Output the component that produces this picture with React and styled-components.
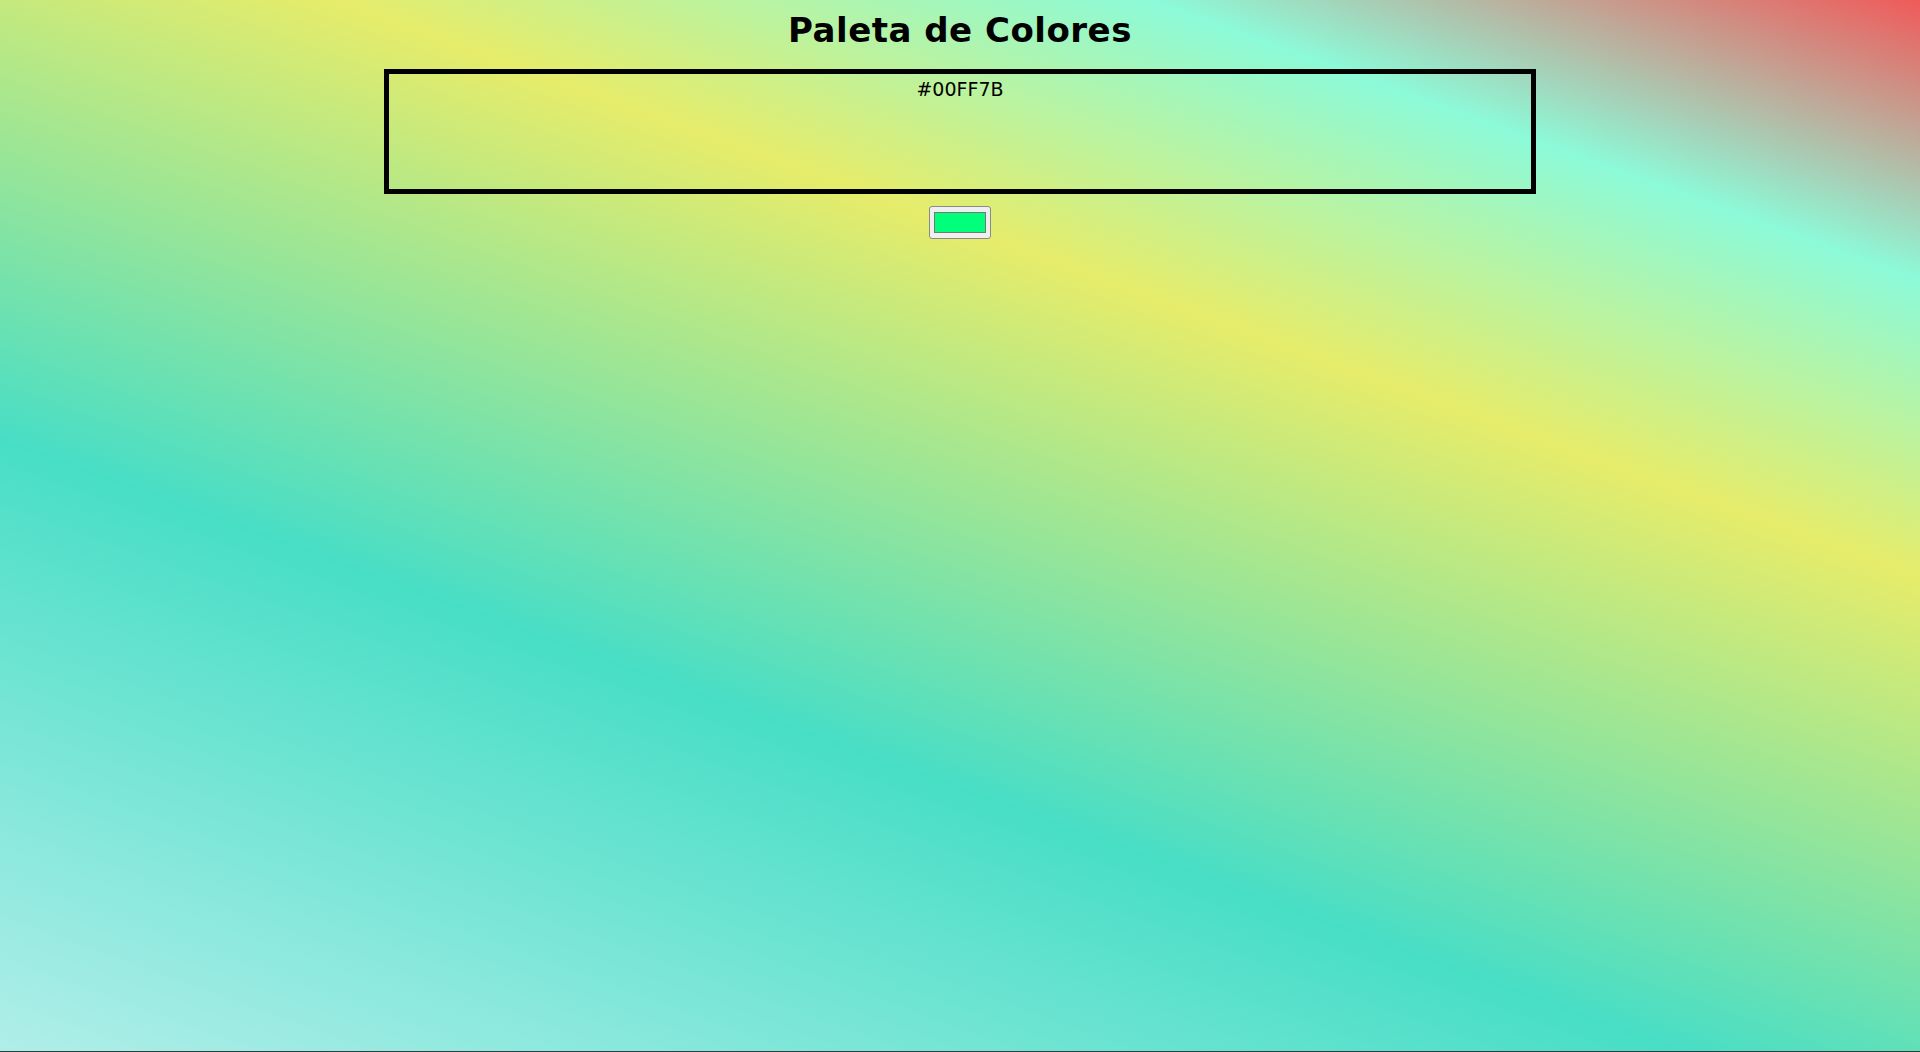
import React, { useState } from "react";
import styled, { createGlobalStyle } from "styled-components";

const GlobalStyle = createGlobalStyle`
  html, body {
    margin: 0;
    padding: 0;
  }
  body {
    font-family: "Comic Sans MS", "DejaVu Sans", sans-serif;
  }
`;

const Page = styled.div`
  box-sizing: border-box;
  min-height: 100vh;
  display: flex;
  flex-direction: column;
  align-items: center;
  background: linear-gradient(
    20deg,
    #b0eee9 0%,
    #48dec6 35%,
    #e6ec6a 67%,
    #8cfad8 84%,
    #f05a5a 100%
  );
  border-bottom: 1px solid #353b3b;
`;

const Title = styled.h1`
  margin: 8px 0 0;
  font-size: 34px;
  line-height: 44px;
  font-weight: 700;
  color: #000;
  letter-spacing: 0.5px;
`;

const Editor = styled.textarea`
  box-sizing: border-box;
  width: 60%;
  height: 125px;
  margin-top: 17px;
  padding: 4px;
  border: 5px solid #000;
  background: transparent;
  font-family: "Comic Sans MS", "DejaVu Sans", sans-serif;
  font-size: 19px;
  text-align: center;
  color: #000;
  resize: none;
  outline: none;
`;

const Picker = styled.input`
  width: 62px;
  height: 33px;
  margin-top: 12px;
  cursor: pointer;
  background: #efefef;
  border: 1px solid #8a8a8a;
  border-radius: 3px;
`;

const App = () => {
  const [color, setColor] = useState("#00FF7B");

  return (
    <Page>
      <GlobalStyle />
      <Title>Paleta de Colores</Title>
      <Editor
        autoFocus
        value={color}
        onChange={(e) => setColor(e.target.value)}
      />
      <Picker
        type="color"
        value={/^#[0-9a-f]{6}$/i.test(color) ? color.toLowerCase() : "#000000"}
        onChange={(e) => setColor(e.target.value.toUpperCase())}
      />
    </Page>
  );
};

export default App;
